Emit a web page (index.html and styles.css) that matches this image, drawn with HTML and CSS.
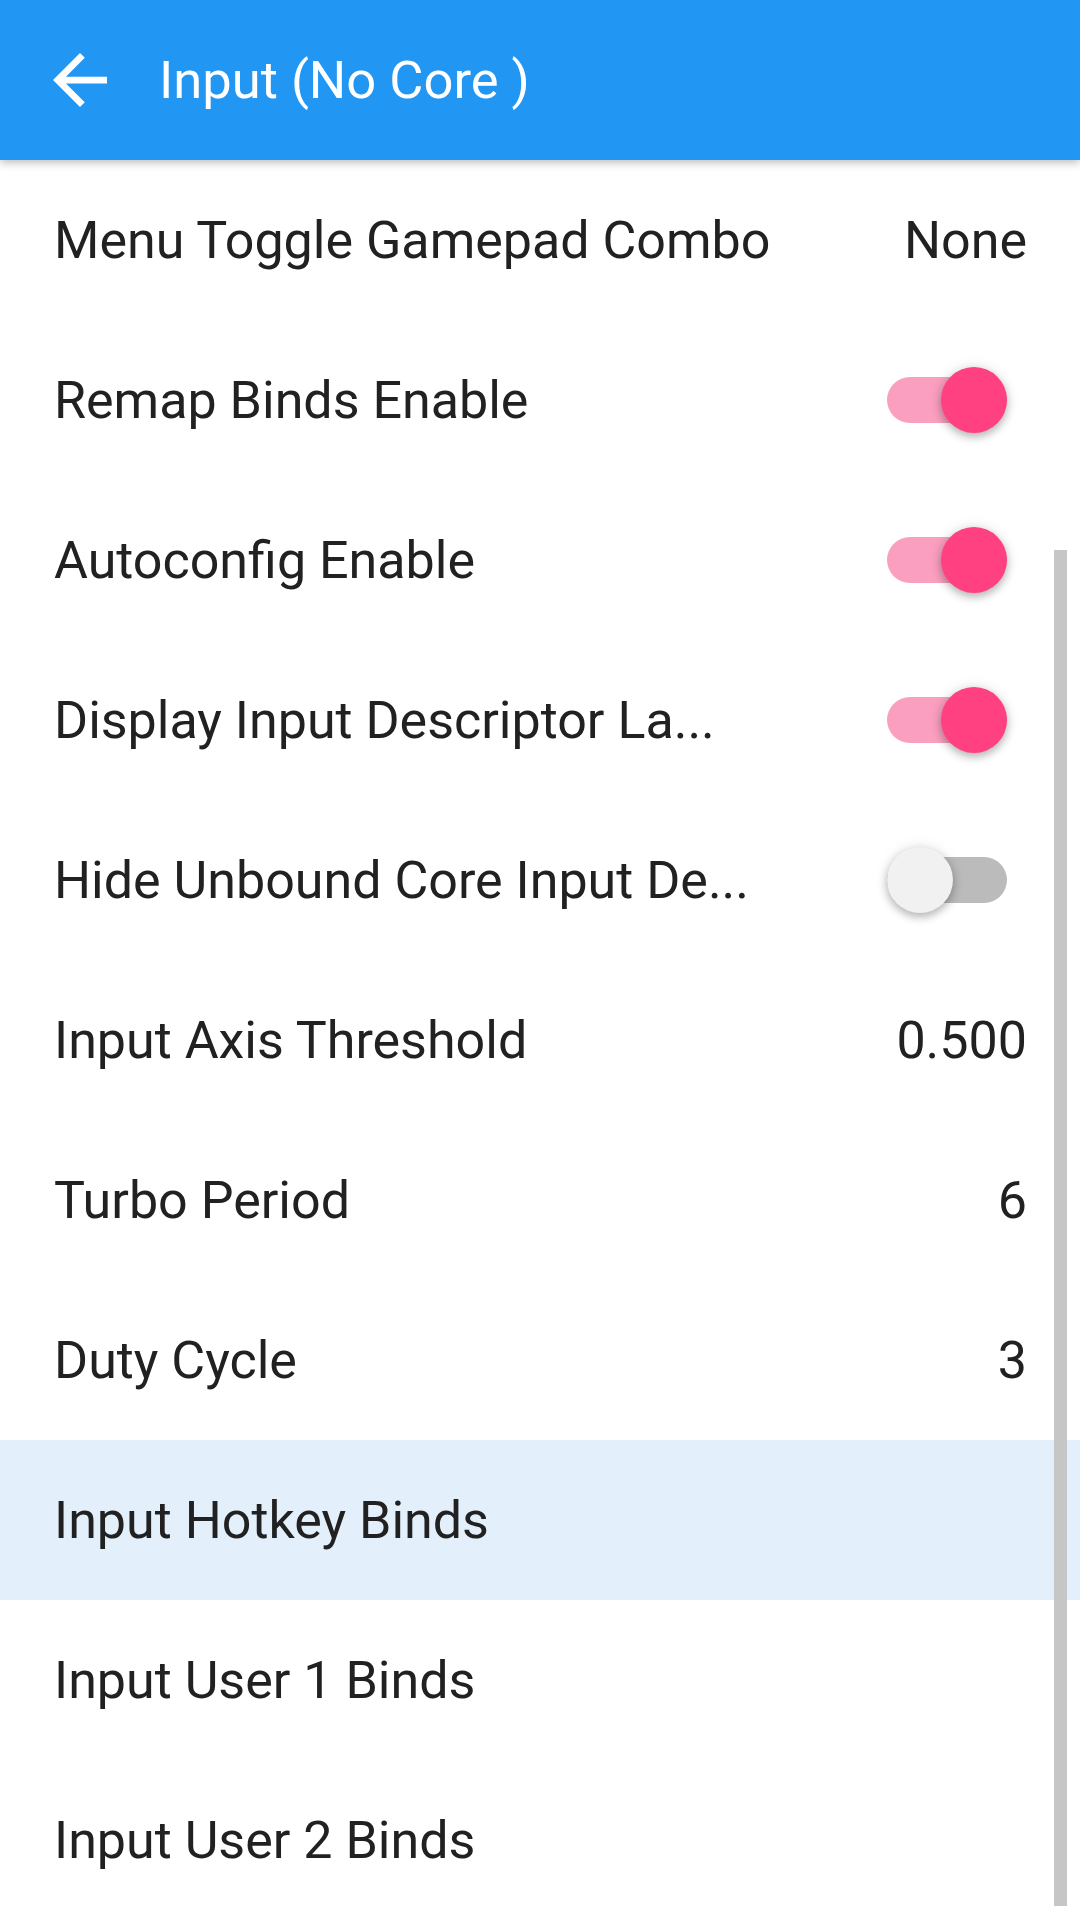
FILE: index.html
```html
<!DOCTYPE html>
<html>
<head>
<meta charset="utf-8">
<link rel="stylesheet" href="styles.css">
</head>
<body>
<div class="screen">
  <header class="toolbar">
    <div class="back">
      <svg width="54" height="54" viewBox="4 4 16 16"><path fill="#fff" d="M20 11H7.83l5.59-5.59L12 4l-8 8 8 8 1.41-1.41L7.83 13H20v-2z"/></svg>
    </div>
    <div class="title">Input (No Core )</div>
  </header>
  <main class="list">
    <div class="row"><span class="label">Menu Toggle Gamepad Combo</span><span class="value">None</span></div>
    <div class="row"><span class="label">Remap Binds Enable</span><span class="switch on"><span class="track"></span><span class="thumb"></span></span></div>
    <div class="row"><span class="label">Autoconfig Enable</span><span class="switch on"><span class="track"></span><span class="thumb"></span></span></div>
    <div class="row"><span class="label">Display Input Descriptor La...</span><span class="switch on"><span class="track"></span><span class="thumb"></span></span></div>
    <div class="row"><span class="label">Hide Unbound Core Input De...</span><span class="switch off"><span class="track"></span><span class="thumb"></span></span></div>
    <div class="row"><span class="label">Input Axis Threshold</span><span class="value">0.500</span></div>
    <div class="row"><span class="label">Turbo Period</span><span class="value">6</span></div>
    <div class="row"><span class="label">Duty Cycle</span><span class="value">3</span></div>
    <div class="row selected"><span class="label">Input Hotkey Binds</span></div>
    <div class="row"><span class="label">Input User 1 Binds</span></div>
    <div class="row"><span class="label">Input User 2 Binds</span></div>
    <div class="scrollbar"></div>
  </main>
</div>
</body>
</html>
```
FILE: styles.css
```css
html, body {
  margin: 0;
  padding: 0;
  background: #ffffff;
}
.screen {
  width: 1080px;
  height: 1920px;
  overflow: hidden;
  position: relative;
  font-family: Roboto, "Noto Sans", sans-serif;
}
.toolbar {
  height: 160px;
  background: #2196F3;
  display: flex;
  align-items: center;
  position: relative;
  z-index: 2;
  box-shadow: 0 3px 8px rgba(0,0,0,0.25);
}
.back {
  width: 54px;
  height: 54px;
  margin-left: 53px;
  margin-right: 52px;
  display: flex;
}
.title {
  color: #ffffff;
  font-size: 52.5px;
  line-height: 1;
}
.list {
  position: relative;
}
.row {
  height: 160px;
  display: flex;
  align-items: center;
  justify-content: space-between;
  padding: 0 53px 0 54px;
  color: #212121;
  font-size: 52px;
}
.row.selected {
  background: #E3F0FC;
}
.value {
  color: #212121;
}
.switch {
  position: relative;
  width: 120px;
  height: 66px;
  margin-right: 20px;
}
.track {
  position: absolute;
  left: 0;
  right: 0;
  top: 10px;
  height: 46px;
  border-radius: 23px;
}
.thumb {
  position: absolute;
  top: 0;
  width: 66px;
  height: 66px;
  border-radius: 50%;
  box-shadow: 0 4px 8px rgba(0,0,0,0.25), 0 0 14px rgba(0,0,0,0.10);
}
.switch.on .track { background: #FA9FBF; }
.switch.on .thumb { right: 0; background: #FF4081; }
.switch.off .track { background: #BBBBBB; }
.switch.off .thumb { left: 0; background: #F1F1F1; }
.scrollbar {
  position: absolute;
  left: 1054px;
  top: 390px;
  width: 13px;
  height: 1356px;
  background: #C6C6C6;
}
```
